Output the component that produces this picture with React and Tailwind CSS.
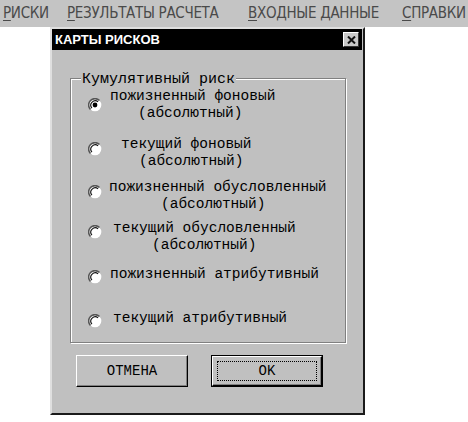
import React from 'react';

const MONO = { fontFamily: '"Liberation Mono", "DejaVu Sans Mono", monospace' };

const MENU = [
    { label: 'РИСКИ', w: 'w-[64px]' },
    { label: 'РЕЗУЛЬТАТЫ РАСЧЕТА', w: 'w-[181px]' },
    { label: 'ВХОДНЫЕ ДАННЫЕ', w: 'w-[154px]' },
    { label: 'СПРАВКИ', w: 'w-[64px]' },
];

// each option: top margin, radio offset, and per-line left offsets (after the radio)
const OPTIONS = [
    { mt: 'mt-0', rt: 'mt-[10px]', checked: true, lines: [['пожизненный фоновый', 'ml-[8px]'], ['(абсолютный)', 'ml-[36px]']] },
    { mt: 'mt-[14px]', rt: 'mt-[6px]', lines: [['текущий фоновый', 'ml-[19px]'], ['(абсолютный)', 'ml-[37px]']] },
    { mt: 'mt-[9px]', rt: 'mt-[6px]', lines: [['пожизненный обусловленный', 'ml-[7px]'], ['(абсолютный)', 'ml-[59px]']] },
    { mt: 'mt-[7px]', rt: 'mt-[5px]', lines: [['текущий обусловленный', 'ml-[11px]'], ['(абсолютный)', 'ml-[50px]']] },
    { mt: 'mt-[12px]', rt: 'mt-[4px]', lines: [['пожизненный атрибутивный', 'ml-[8px]']] },
    { mt: 'mt-[26px]', rt: 'mt-[4px]', lines: [['текущий атрибутивный', 'ml-[11px]']] },
];

function Radio({ checked }) {
    return (
        <svg width="14" height="14" viewBox="0 0 14 14" className="shrink-0">
            <circle cx="7" cy="7" r="6.3" fill="#fff" />
            <path d="M11.5 2.5 A6.3 6.3 0 0 0 2.5 11.5" fill="none" stroke="#555" strokeWidth="1.6" />
            <path d="M10.1 3.9 A4.4 4.4 0 0 0 3.9 10.1" fill="none" stroke="#111" strokeWidth="1.1" />
            {checked && <circle cx="7" cy="7" r="2.4" fill="#000" />}
        </svg>
    );
}

function Button({ children, isDefault }) {
    return (
        <div className={`w-[112px] h-[32px] box-border ${isDefault ? 'border border-black' : ''}`}>
            <div className="w-full h-full bg-[#c0c0c0] border-t border-l border-t-white border-l-white border-r border-b border-r-black border-b-black shadow-[inset_-1px_-1px_0_#808080] flex items-center justify-center">
                <div className={`flex items-center justify-center ${isDefault ? 'w-[calc(100%-8px)] h-[calc(100%-8px)] border border-dotted border-black' : ''}`}>
                    <span className="text-[14px] leading-none text-black" style={MONO}>{children}</span>
                </div>
            </div>
        </div>
    );
}

export default function App() {
    return (
        <div className="w-[468px] h-[422px] bg-white overflow-hidden">
            <div
                className="h-[27px] bg-[#c4c4c4] flex items-center pl-[3px] text-[15px] text-[#4a4a4a] tracking-[-0.3px]"
                style={{ fontFamily: '"Liberation Sans Narrow", "DejaVu Sans Condensed", "Liberation Sans", sans-serif' }}
            >
                {MENU.map((m) => (
                    <div key={m.label} className={`${m.w} shrink-0 whitespace-nowrap`}>
                        <span className="underline underline-offset-2">{m.label[0]}</span>{m.label.slice(1)}
                    </div>
                ))}
            </div>

            <div className="ml-[50px] w-[315px] h-[388px] box-border bg-[#c0c0c0] border-2 border-t-[#dfdfdf] border-l-[#dfdfdf] border-r-[#1a1a1a] border-b-[#1a1a1a] pr-[1px] flex flex-col">
                <div className="h-[21px] bg-black flex items-center justify-between pl-[3px] pr-[3px] shrink-0">
                    <span className="text-white text-[13px] font-bold leading-none" style={{ fontFamily: '"Liberation Sans", Arial, sans-serif' }}>
                        КАРТЫ РИСКОВ
                    </span>
                    <div className="w-[16px] h-[15px] bg-[#c8c8c8] border-t border-l border-white border-r border-b border-r-[#333] border-b-[#333] flex items-center justify-center">
                        <svg width="9" height="8" viewBox="0 0 9 8">
                            <path d="M1 0.5 L8 7.5 M8 0.5 L1 7.5" stroke="#111" strokeWidth="2" />
                        </svg>
                    </div>
                </div>

                <div className="pl-[18px] pt-[28px]">
                    <div className="relative w-[276px] h-[265px] box-border border border-[#808080] shadow-[inset_1px_1px_0_#fff,1px_1px_0_#fff] pt-[9px] text-black" style={MONO}>
                        <span className="absolute left-[10px] -top-[8px] bg-[#c0c0c0] px-px text-[15px] leading-[17px]">
                            Кумулятивный риск
                        </span>
                        {OPTIONS.map((o, i) => (
                            <div key={i} className={`flex ${o.mt}`}>
                                <div className={`ml-[17px] ${o.rt}`}>
                                    <Radio checked={o.checked} />
                                </div>
                                <div className="flex flex-col text-[14.5px] leading-[17px] whitespace-nowrap">
                                    {o.lines.map(([t, ml]) => (
                                        <span key={t} className={ml}>{t}</span>
                                    ))}
                                </div>
                            </div>
                        ))}
                    </div>
                </div>

                <div className="flex gap-[23px] pl-[24px] mt-[12px]">
                    <Button>ОТМЕНА</Button>
                    <Button isDefault>OK</Button>
                </div>
            </div>
        </div>
    );
}
